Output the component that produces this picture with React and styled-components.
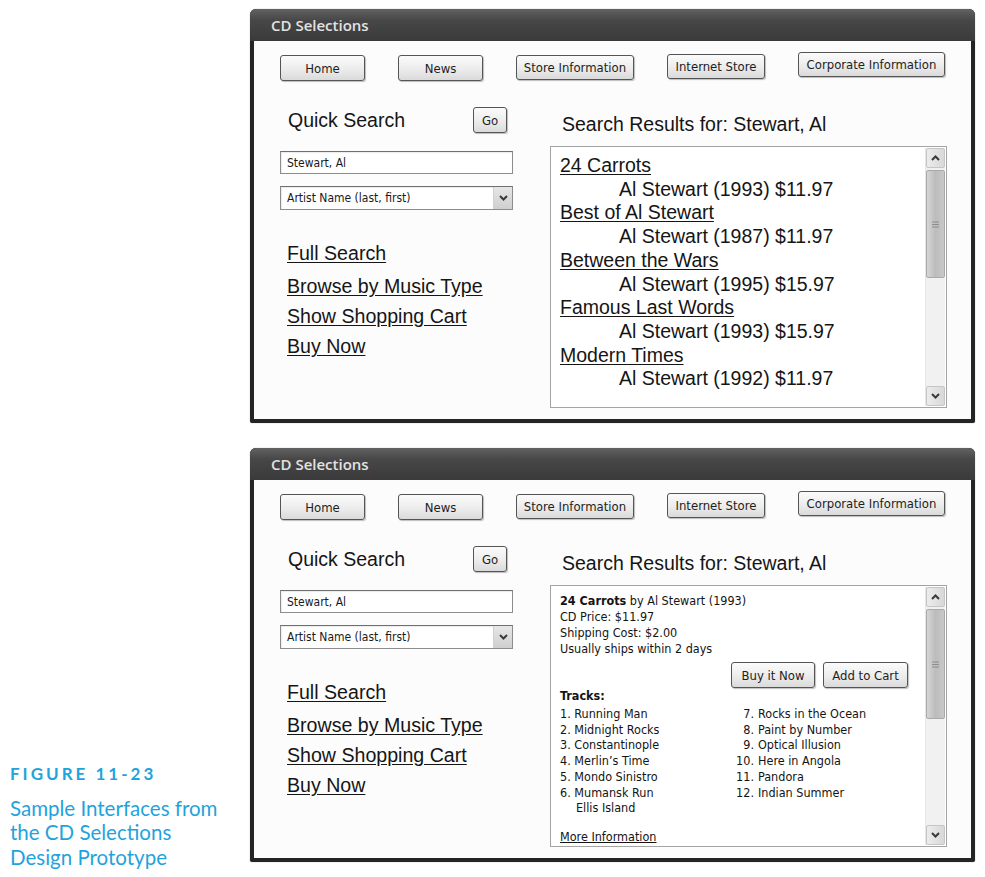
import React from 'react';
import styled, { createGlobalStyle } from 'styled-components';

const UI = `"DejaVu Sans Condensed", "DejaVu Sans", Tahoma, sans-serif`;
const ARIAL = `"Liberation Sans", Arial, sans-serif`;

const GlobalStyle = createGlobalStyle`
  html, body {
    margin: 0;
    padding: 0;
    background: #fff;
  }
  body {
    font-family: ${ARIAL};
  }
`;

const Page = styled.div`
  display: flex;
  width: 985px;
  height: 877px;
  box-sizing: border-box;
`;

const Caption = styled.div`
  width: 240px;
  padding-left: 10px;
  padding-bottom: 8px;
  align-self: flex-end;
  color: #1fa3dd;
  font-family: Lato, "Open Sans", sans-serif;
  .label {
    font-size: 17px;
    font-weight: 700;
    letter-spacing: 3px;
    line-height: 20px;
    margin-bottom: 12px;
  }
  .text {
    font-size: 20.5px;
    line-height: 24.5px;
    white-space: nowrap;
  }
`;

const Stack = styled.div`
  display: flex;
  flex-direction: column;
  gap: 25px;
  padding-top: 9px;
`;

const Window = styled.section`
  width: 725px;
  background: #242424;
  border-radius: 6px 6px 2px 2px;
  padding-bottom: 4px;
  box-shadow: 0 0 1px rgba(0, 0, 0, .5);
`;

const TitleBar = styled.div`
  height: 32px;
  display: flex;
  align-items: center;
  padding-left: 21px;
  border-radius: 6px 6px 0 0;
  background: linear-gradient(#626262, #474747 35%, #3a3a3a);
  color: #e2e2e2;
  font-family: "Open Sans", "DejaVu Sans", sans-serif;
  font-size: 15px;
  font-weight: 600;
`;

const Body = styled.div`
  margin: 0 4px;
  background: #fcfcfc;
  padding: 11px 24px 11px 26px;
`;

const NavRow = styled.div`
  display: flex;
  justify-content: space-between;
  align-items: flex-start;
  height: 29px;
  padding-right: 2px;
`;

const Button = styled.div`
  display: flex;
  align-items: center;
  justify-content: center;
  box-sizing: border-box;
  width: ${p => p.$w}px;
  height: ${p => p.$h || 26}px;
  margin-top: ${p => p.$drop || 0}px;
  padding: 0 6px;
  border: 1px solid #555;
  border-radius: 3px;
  background: linear-gradient(#fbfbfb, #ececec 55%, #dadada);
  box-shadow: 1px 1px 1px rgba(0, 0, 0, .25);
  font-family: ${UI};
  font-size: 13px;
  color: #1e1e1e;
  white-space: nowrap;
`;

const Main = styled.div`
  display: grid;
  grid-template-columns: 233px 397px;
  column-gap: 37px;
  margin-top: 26px;
`;

const LeftCol = styled.div`
  display: flex;
  flex-direction: column;
`;

const SearchHead = styled.div`
  display: flex;
  justify-content: space-between;
  align-items: center;
  height: 26px;
  padding: 0 6px 0 8px;
`;

const BigLabel = styled.div`
  font-family: ${ARIAL};
  font-size: 19.5px;
  color: #151515;
`;

const Field = styled.div`
  display: flex;
  align-items: center;
  justify-content: space-between;
  box-sizing: border-box;
  height: ${p => p.$h}px;
  margin-top: ${p => p.$gap}px;
  padding-left: 6px;
  border: 1px solid #8c8c8c;
  border-top-color: #6f6f6f;
  background: #fff;
  box-shadow: inset 1px 1px 1px rgba(0, 0, 0, .08);
  font-family: ${UI};
  font-size: 12px;
  color: #1a1a1a;
`;

const DropArrow = styled.div`
  width: 18px;
  height: 100%;
  display: flex;
  align-items: center;
  justify-content: center;
  background: linear-gradient(#e6e6e6, #cfcfcf);
  border-left: 1px solid #d0d0d0;
`;

const LinkList = styled.div`
  display: flex;
  flex-direction: column;
  align-items: flex-start;
  margin-top: 28px;
  padding-left: 7px;
`;

const BigLink = styled.a`
  font-family: ${ARIAL};
  font-size: 19.6px;
  line-height: 30px;
  color: #151515;
  text-decoration: underline;
  text-underline-offset: 2px;
  margin-bottom: ${p => p.$after || 0}px;
`;

const RightCol = styled.div`
  display: flex;
  flex-direction: column;
`;

const ResultsHeading = styled.div`
  margin: 6px 0 11px;
  padding-left: 12px;
  line-height: 22px;
  font-family: ${ARIAL};
  font-size: 19.5px;
  color: #151515;
`;

const ResultsBox = styled.div`
  display: flex;
  height: 262px;
  box-sizing: border-box;
  border: 1px solid #a4a4a4;
  background: #fff;
`;

const ResultsContent = styled.div`
  flex: 1;
  padding: 7px 0 0 9px;
  overflow: hidden;
`;

const Scrollbar = styled.div`
  display: flex;
  flex-direction: column;
  width: 19px;
  margin: 1px 1px 1px 0;
  background: #f1f1f1;
  border-left: 1px solid #e6e6e6;
`;

const ScrollArrow = styled.div`
  display: flex;
  align-items: center;
  justify-content: center;
  height: 18px;
  border: 1px solid #c6c6c6;
  border-radius: 2px;
  background: linear-gradient(90deg, #ececec, #d8d8d8);
`;

const Thumb = styled.div`
  display: flex;
  align-items: center;
  justify-content: center;
  height: ${p => p.$h}px;
  margin-top: 2px;
  box-sizing: border-box;
  border: 1px solid #a9a9a9;
  border-radius: 2px;
  background: linear-gradient(90deg, #d6d6d6, #bcbcbc 50%, #c8c8c8);
`;

const Track = styled.div`
  flex: 1;
`;

const ResultTitle = styled.a`
  display: block;
  font-family: ${ARIAL};
  font-size: 19.5px;
  line-height: 23.7px;
  color: #151515;
  text-decoration: underline;
  text-underline-offset: 2px;
  width: max-content;
`;

const ResultInfo = styled.div`
  padding-left: 59px;
  font-family: ${ARIAL};
  font-size: 19.5px;
  line-height: 23.7px;
  color: #151515;
`;

const Detail = styled.div`
  font-family: ${UI};
  font-size: 12.5px;
  line-height: 16px;
  color: #141414;
  b {
    font-weight: 700;
  }
`;

const BuyRow = styled.div`
  display: flex;
  justify-content: flex-end;
  gap: 8px;
  margin-top: 5px;
  padding-right: 17px;
`;

const Tracks = styled.div`
  display: grid;
  grid-template-columns: 174px 1fr;
  margin-top: 2px;
  font-family: ${UI};
  font-size: 12.5px;
  line-height: 15.7px;
  color: #141414;
`;

const TrackItem = styled.div`
  padding-left: ${p => p.$indent || 0}px;
  white-space: nowrap;
  .num {
    display: inline-block;
    width: 20px;
    text-align: right;
    margin-right: 4px;
  }
`;

const MoreLink = styled.a`
  display: inline-block;
  margin-top: 13px;
  font-family: ${UI};
  font-size: 12.5px;
  line-height: 16px;
  color: #141414;
  text-decoration: underline;
`;

const Chevron = ({ up }) => (
  <svg width="11" height="8" viewBox="0 0 11 8">
    <polyline
      points={up ? '2,6 5.5,2.5 9,6' : '2,2 5.5,5.5 9,2'}
      fill="none"
      stroke="#3a3a3a"
      strokeWidth="2"
    />
  </svg>
);

const Grip = () => (
  <svg width="7" height="7" viewBox="0 0 7 7">
    <path d="M0 1h7M0 3.5h7M0 6h7" stroke="#8e8e8e" strokeWidth="1" />
  </svg>
);

const ScrollBar = ({ thumb }) => (
  <Scrollbar>
    <ScrollArrow><Chevron up /></ScrollArrow>
    <Thumb $h={thumb}><Grip /></Thumb>
    <Track />
    <ScrollArrow><Chevron /></ScrollArrow>
  </Scrollbar>
);

const navItems = [
  { label: 'Home', w: 85, drop: 3 },
  { label: 'News', w: 85, drop: 3 },
  { label: 'Store Information', w: 118, drop: 3, h: 25 },
  { label: 'Internet Store', w: 98, drop: 2, h: 25 },
  { label: 'Corporate Information', w: 147, drop: 0, h: 25 },
];

const results = [
  { title: '24 Carrots', info: 'Al Stewart (1993) $11.97' },
  { title: 'Best of Al Stewart', info: 'Al Stewart (1987) $11.97' },
  { title: 'Between the Wars', info: 'Al Stewart (1995) $15.97' },
  { title: 'Famous Last Words', info: 'Al Stewart (1993) $15.97' },
  { title: 'Modern Times', info: 'Al Stewart (1992) $11.97' },
];

const tracksLeft = [
  '1. Running Man',
  '2. Midnight Rocks',
  '3. Constantinople',
  '4. Merlin’s Time',
  '5. Mondo Sinistro',
  '6. Mumansk Run',
];

const tracksRight = [
  ['7.', 'Rocks in the Ocean'],
  ['8.', 'Paint by Number'],
  ['9.', 'Optical Illusion'],
  ['10.', 'Here in Angola'],
  ['11.', 'Pandora'],
  ['12.', 'Indian Summer'],
];

const SearchSide = () => (
  <LeftCol>
    <SearchHead>
      <BigLabel>Quick Search</BigLabel>
      <Button $w={34}>Go</Button>
    </SearchHead>
    <Field $h={23} $gap={18}>Stewart, Al</Field>
    <Field $h={24} $gap={12}>
      Artist Name (last, first)
      <DropArrow><Chevron /></DropArrow>
    </Field>
    <LinkList>
      <BigLink $after={3}>Full Search</BigLink>
      <BigLink>Browse by Music Type</BigLink>
      <BigLink>Show Shopping Cart</BigLink>
      <BigLink>Buy Now</BigLink>
    </LinkList>
  </LeftCol>
);

const AppWindow = ({ children, thumb }) => (
  <Window>
    <TitleBar>CD Selections</TitleBar>
    <Body>
      <NavRow>
        {navItems.map(n => (
          <Button key={n.label} $w={n.w} $h={n.h} $drop={n.drop}>{n.label}</Button>
        ))}
      </NavRow>
      <Main>
        <SearchSide />
        <RightCol>
          <ResultsHeading>Search Results for: Stewart, Al</ResultsHeading>
          <ResultsBox>
            <ResultsContent>{children}</ResultsContent>
            <ScrollBar thumb={thumb} />
          </ResultsBox>
        </RightCol>
      </Main>
    </Body>
  </Window>
);

export default function App() {
  return (
    <Page>
      <GlobalStyle />
      <Caption>
        <div className="label">FIGURE 11-23</div>
        <div className="text">Sample Interfaces from</div>
        <div className="text">the CD Selections</div>
        <div className="text">Design Prototype</div>
      </Caption>
      <Stack>
        <AppWindow thumb={108}>
          {results.map(r => (
            <React.Fragment key={r.title}>
              <ResultTitle>{r.title}</ResultTitle>
              <ResultInfo>{r.info}</ResultInfo>
            </React.Fragment>
          ))}
        </AppWindow>
        <AppWindow thumb={110}>
          <Detail><b>24 Carrots</b> by Al Stewart (1993)</Detail>
          <Detail>CD Price: $11.97</Detail>
          <Detail>Shipping Cost: $2.00</Detail>
          <Detail>Usually ships within 2 days</Detail>
          <BuyRow>
            <Button $w={84}>Buy it Now</Button>
            <Button $w={85}>Add to Cart</Button>
          </BuyRow>
          <Detail><b>Tracks:</b></Detail>
          <Tracks>
            <div>
              {tracksLeft.map(t => <TrackItem key={t}>{t}</TrackItem>)}
              <TrackItem $indent={16}>Ellis Island</TrackItem>
            </div>
            <div>
              {tracksRight.map(([n, t]) => (
                <TrackItem key={t}><span className="num">{n}</span>{t}</TrackItem>
              ))}
            </div>
          </Tracks>
          <MoreLink>More Information</MoreLink>
        </AppWindow>
      </Stack>
    </Page>
  );
}
